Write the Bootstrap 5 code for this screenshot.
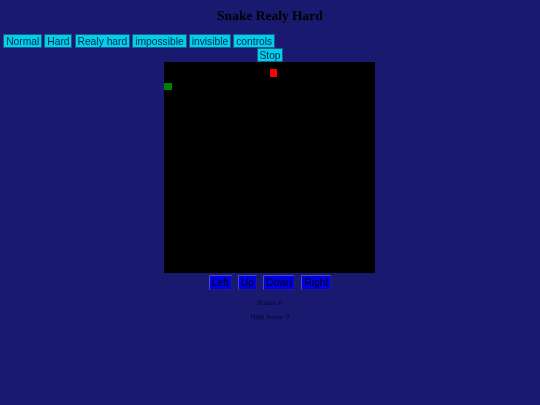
<!DOCTYPE html>
<html lang="en">
<head>
<meta charset="utf-8">
<title>Snake Realy Hard</title>
<link rel="stylesheet" href="https://cdn.jsdelivr.net/npm/bootstrap@5.3.0/dist/css/bootstrap.min.css">
<style>
html, body { height: 100%; }
body { background: #191970; color: #000; font-family: "Liberation Serif", serif; font-size: 7px; line-height: 1.15; overflow: hidden; text-rendering: geometricPrecision; }
.page-wrap { filter: blur(0.3px); }
.game-title { font-family: "Liberation Serif", serif; font-weight: 700; font-size: 13.5px; line-height: 16px; margin: 0; padding-top: 8px; padding-bottom: 10px; color: #000; }
.menu-row { gap: 2.1px; padding-left: 3.3px; height: 14px; }
.stop-row { height: 14.3px; }
.game-btn { font-family: "Liberation Sans", sans-serif; font-size: 10.3px; line-height: 13px; height: 14px; padding: 0 1.9px; color: #002a40; border: 1px solid #245a86; border-radius: 0; background: #00d0f0; }
.pad-btn { color: #000; background: #0000e6; border: 1px solid; border-color: #4a4ab8 #20206a #20206a #4a4ab8; padding: 0 2px; height: 15px; line-height: 14px; }
.board { width: 212px; height: 211px; background: #000; margin: 0 auto; position: relative; border-right: 1px solid #191970; }
.food { position: absolute; left: 106px; top: 7px; width: 7px; height: 7.5px; background: #f00; }
.snake { position: absolute; left: 0; top: 21px; width: 8px; height: 7px; background: #008000; }
.pad-row { gap: 6px; margin-top: 1.7px; }
.stat-line { margin: 0; text-align: center; color: #00002a; line-height: 8px; }
.stat-first { margin-top: 9.5px; margin-bottom: 6px; }
</style>
</head>
<body>
<div class="page-wrap">
<h1 class="game-title text-center">Snake Realy Hard</h1>
<div class="d-flex menu-row">
<button class="game-btn" type="button">Normal</button>
<button class="game-btn" type="button">Hard</button>
<button class="game-btn" type="button">Realy hard</button>
<button class="game-btn" type="button">impossible</button>
<button class="game-btn" type="button">invisible</button>
<button class="game-btn" type="button">controls</button>
</div>
<div class="d-flex justify-content-center stop-row">
<button class="game-btn" type="button">Stop</button>
</div>
<div class="board">
<div class="food"></div>
<div class="snake"></div>
</div>
<div class="d-flex justify-content-center pad-row">
<button class="game-btn pad-btn" type="button">Left</button>
<button class="game-btn pad-btn" type="button">Up</button>
<button class="game-btn pad-btn" type="button">Down</button>
<button class="game-btn pad-btn" type="button">Right</button>
</div>
<p class="stat-line stat-first">Points: 0</p>
<p class="stat-line">High Score: 0</p>
</div>
<script src="https://cdn.jsdelivr.net/npm/bootstrap@5.3.0/dist/js/bootstrap.bundle.min.js"></script>
</body>
</html>
